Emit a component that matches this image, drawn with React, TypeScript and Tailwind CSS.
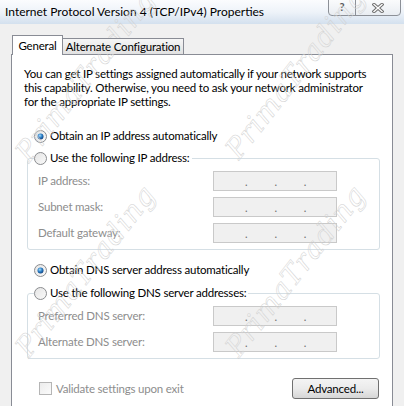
import type { ReactNode } from 'react';

function Radio({ checked }: { checked?: boolean }) {
  return (
    <svg width="13" height="13" viewBox="0 0 13 13" className="shrink-0">
      <defs>
        <linearGradient id="ring" x1="0" y1="0" x2="1" y2="1">
          <stop offset="0" stopColor="#e4e4e4" />
          <stop offset="1" stopColor="#fafafa" />
        </linearGradient>
        <radialGradient id="dot" cx="0.4" cy="0.35" r="0.7">
          <stop offset="0" stopColor="#a8dcf8" />
          <stop offset="0.5" stopColor="#2b7fc7" />
          <stop offset="1" stopColor="#0f3c78" />
        </radialGradient>
      </defs>
      <circle cx="6.5" cy="6.5" r="6" fill="url(#ring)" stroke="#8a8c8f" />
      {checked && <circle cx="6.5" cy="6.5" r="3" fill="url(#dot)" />}
    </svg>
  );
}

function IpBox() {
  return (
    <div className="w-[124px] h-[20px] border border-[#c9c9c9] bg-[#f0f0f0] flex items-center pl-[31px] gap-[27px] text-[#6d6d6d] text-[11px] leading-none">
      <span>.</span>
      <span>.</span>
      <span>.</span>
    </div>
  );
}

function Field({ label }: { label: string }) {
  return (
    <div className="flex items-center h-[20px]">
      <span className="w-[175px] text-[#8d8d8d]">{label}</span>
      <IpBox />
    </div>
  );
}

function Group({ legend, children }: { legend: string; children: ReactNode }) {
  return (
    <div className="ml-[3px] border border-[#d5dfe5] rounded-[3px] pl-[10px] pb-[6px]">
      <div className="-mt-[9px] -ml-[4px] w-fit bg-white pr-[2px] flex items-center gap-[3px] h-[16px]">
        <Radio />
        <span>{legend}</span>
      </div>
      <div className="mt-[5px] flex flex-col gap-[6px]">{children}</div>
    </div>
  );
}

function Watermark({ className }: { className: string }) {
  return (
    <div
      className={`absolute pointer-events-none -rotate-[52deg] text-[28px] italic font-['DejaVu_Serif'] text-transparent [-webkit-text-stroke:0.5px_#d2d2d2] whitespace-nowrap tracking-[1px] ${className}`}
    >
      PrimaTrading
    </div>
  );
}

export default function App() {
  return (
    <div className="relative w-[404px] h-[406px] overflow-hidden bg-[#f0f0f0] font-['Lato',sans-serif] text-[11.5px] tracking-[-0.2px] text-black">
      {/* Title bar */}
      <div className="h-[24px] flex items-start justify-between bg-gradient-to-b from-[#fbfcfe] via-[#eef3f9] to-[#d3e0ee]">
        <div className="pl-[5px] pt-[4px] text-[12px] leading-[16px] tracking-normal">
          Internet Protocol Version 4 (TCP/IPv4) Properties
        </div>
        <div className="mr-[3px] flex h-[17px] -mt-[1px] border border-[#8c9097] rounded-b-[4px] bg-gradient-to-b from-[#fafbfc] to-[#e9edf2] text-[#5a5a5a]">
          <div className="w-[27px] flex items-center justify-center border-r border-[#8c9097] text-[11px] font-bold">
            ?
          </div>
          <div className="w-[44px] flex items-center justify-center">
            <svg width="12" height="10" viewBox="0 0 12 10">
              <path d="M2 1.5 L10 8.5 M10 1.5 L2 8.5" stroke="#6e6e6e" strokeWidth="3.4" strokeLinecap="square" />
              <path d="M2 1.5 L10 8.5 M10 1.5 L2 8.5" stroke="#fdfdfd" strokeWidth="1.4" strokeLinecap="square" />
            </svg>
          </div>
        </div>
      </div>

      {/* Tabs */}
      <div className="mt-[11px] ml-[12px] flex items-end relative z-10 -mb-[1px]">
        <div className="h-[20px] w-[51px] border border-b-0 border-[#898c95] bg-white flex items-center justify-center">
          General
        </div>
        <div className="h-[16px] mb-[1px] w-[122px] -ml-[1px] border border-b-0 border-[#898c95] bg-gradient-to-b from-[#f6f6f6] to-[#e1e1e1] flex items-center justify-center whitespace-nowrap">
          Alternate Configuration
        </div>
      </div>

      {/* Panel */}
      <div className="mx-[11px] h-[360px] border border-[#898c95] bg-white pt-[12px] px-[12px] leading-[14px]">
        <p className="whitespace-nowrap">
          You can get IP settings assigned automatically if your network supports
          <br />
          this capability. Otherwise, you need to ask your network administrator
          <br />
          for the appropriate IP settings.
        </p>

        <div className="mt-[19px] ml-[10px] h-[16px] flex items-center gap-[3px]">
          <Radio checked />
          <span>Obtain an IP address automatically</span>
        </div>

        <div className="mt-[14px]">
          <Group legend="Use the following IP address:">
            <Field label="IP address:" />
            <Field label="Subnet mask:" />
            <Field label="Default gateway:" />
          </Group>
        </div>

        <div className="mt-[12px] ml-[10px] h-[16px] flex items-center gap-[3px]">
          <Radio checked />
          <span>Obtain DNS server address automatically</span>
        </div>

        <div className="mt-[15px]">
          <Group legend="Use the following DNS server addresses:">
            <Field label="Preferred DNS server:" />
            <Field label="Alternate DNS server:" />
          </Group>
        </div>

        <div className="mt-[19px] flex items-center justify-between">
          <div className="ml-[15px] flex items-center gap-[4px] text-[#8d8d8d]">
            <div className="w-[13px] h-[13px] border border-[#b5b5b5] bg-gradient-to-br from-[#ececec] to-[#fbfbfb]" />
            <span>Validate settings upon exit</span>
          </div>
          <button className="mr-[1px] w-[87px] h-[21px] rounded-[3px] border border-[#707070] bg-gradient-to-b from-[#f4f4f4] via-[#ebebeb] to-[#d6d6d6] text-[11.5px]">
            Advanced...
          </button>
        </div>
      </div>

      <Watermark className="left-[-18px] top-[55px]" />
      <Watermark className="left-[192px] top-[52px]" />
      <Watermark className="left-[-18px] top-[250px]" />
      <Watermark className="left-[192px] top-[250px]" />
    </div>
  );
}
